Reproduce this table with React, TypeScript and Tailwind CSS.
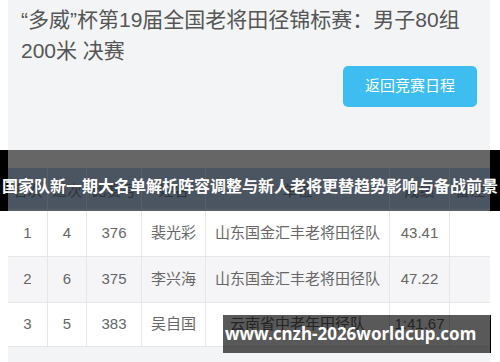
import React from "react";

const FONT = '"Liberation Sans","Noto Sans CJK SC",sans-serif';

const cols = "grid grid-cols-[40px_39px_55px_64px_184px_60px_40px]";

const rows = [
  ["1", "4", "376", "裴光彩", "山东国金汇丰老将田径队", "43.41", ""],
  ["2", "6", "375", "李兴海", "山东国金汇丰老将田径队", "47.22", ""],
  ["3", "5", "383", "吴自国", "云南省中老年田径队", "1:41.67", ""],
];

const heads = ["名次", "道次", "比赛号", "姓名", "单位", "成绩", "备注"];

export default function App() {
  return (
    <div className="relative w-[500px] h-[362px] overflow-hidden bg-white" style={{ fontFamily: FONT }}>
      <div className="ml-[8px] w-[482px] h-[362px] bg-[#f3f4f6] flex flex-col">
        <div className="pl-[13px] pt-[4px] text-[21px] leading-[31px] text-[#555555]">
          <div>“多威”杯第19届全国老将田径锦标赛：男子80组</div>
          <div>200米 决赛</div>
        </div>
        <div className="flex justify-end pr-[13px]">
          <div className="w-[134px] h-[41px] rounded-[5px] bg-[#3ebdf0] text-white text-[15px] flex items-center justify-center">
            返回竞赛日程
          </div>
        </div>
        <div className="mt-[61px]">
          <div className={`${cols} h-[43px] bg-[#b4c8e8] border-b-2 border-[#d3e2f5]`}>
            {heads.map((h, i) => (
              <div
                key={i}
                className={`flex items-center justify-center pt-[6px] text-[15px] text-[#6f7c8e] ${i < 6 ? "border-r border-[#d6e0ee]" : ""}`}
              >
                {h}
              </div>
            ))}
          </div>
          {rows.map((r, ri) => (
            <div
              key={ri}
              className={`${cols} ${ri === 2 ? "h-[44px]" : "h-[46px]"} border-b border-[#e6e6e6] ${ri === 1 ? "bg-[#f5f5f7]" : "bg-white"}`}
            >
              {r.map((c, ci) => (
                <div
                  key={ci}
                  className={`flex items-center justify-center text-[15px] text-[#666666] ${ci < 6 ? "border-r border-[#e6e6e6]" : ""}`}
                >
                  {c}
                </div>
              ))}
            </div>
          ))}
        </div>
      </div>

      <div className="absolute left-0 top-[150px] w-[500px] h-[61px] flex">
        <div className="w-[8px] h-full bg-black" />
        <div className="w-[482px] h-full bg-black/[0.58]" />
        <div className="w-[10px] h-full bg-black" />
      </div>
      <div className="absolute left-[-20px] top-[150px] w-[540px] h-[61px] flex items-center justify-center pt-[9px] text-white font-bold text-[16px] whitespace-nowrap" style={{ fontFamily: '"Noto Sans CJK SC",sans-serif' }}>
        国家队新一期大名单解析阵容调整与新人老将更替趋势影响与备战前景
      </div>

      <div
        className="absolute left-[223px] top-[315px] w-[268px] h-[38px] bg-black/[0.65] border-r border-black flex items-center pl-[2px] text-white font-bold text-[17px] whitespace-nowrap"
        style={{ fontFamily: '"Noto Sans",sans-serif' }}
      >
        www.cnzh-2026worldcup.com
      </div>
    </div>
  );
}
